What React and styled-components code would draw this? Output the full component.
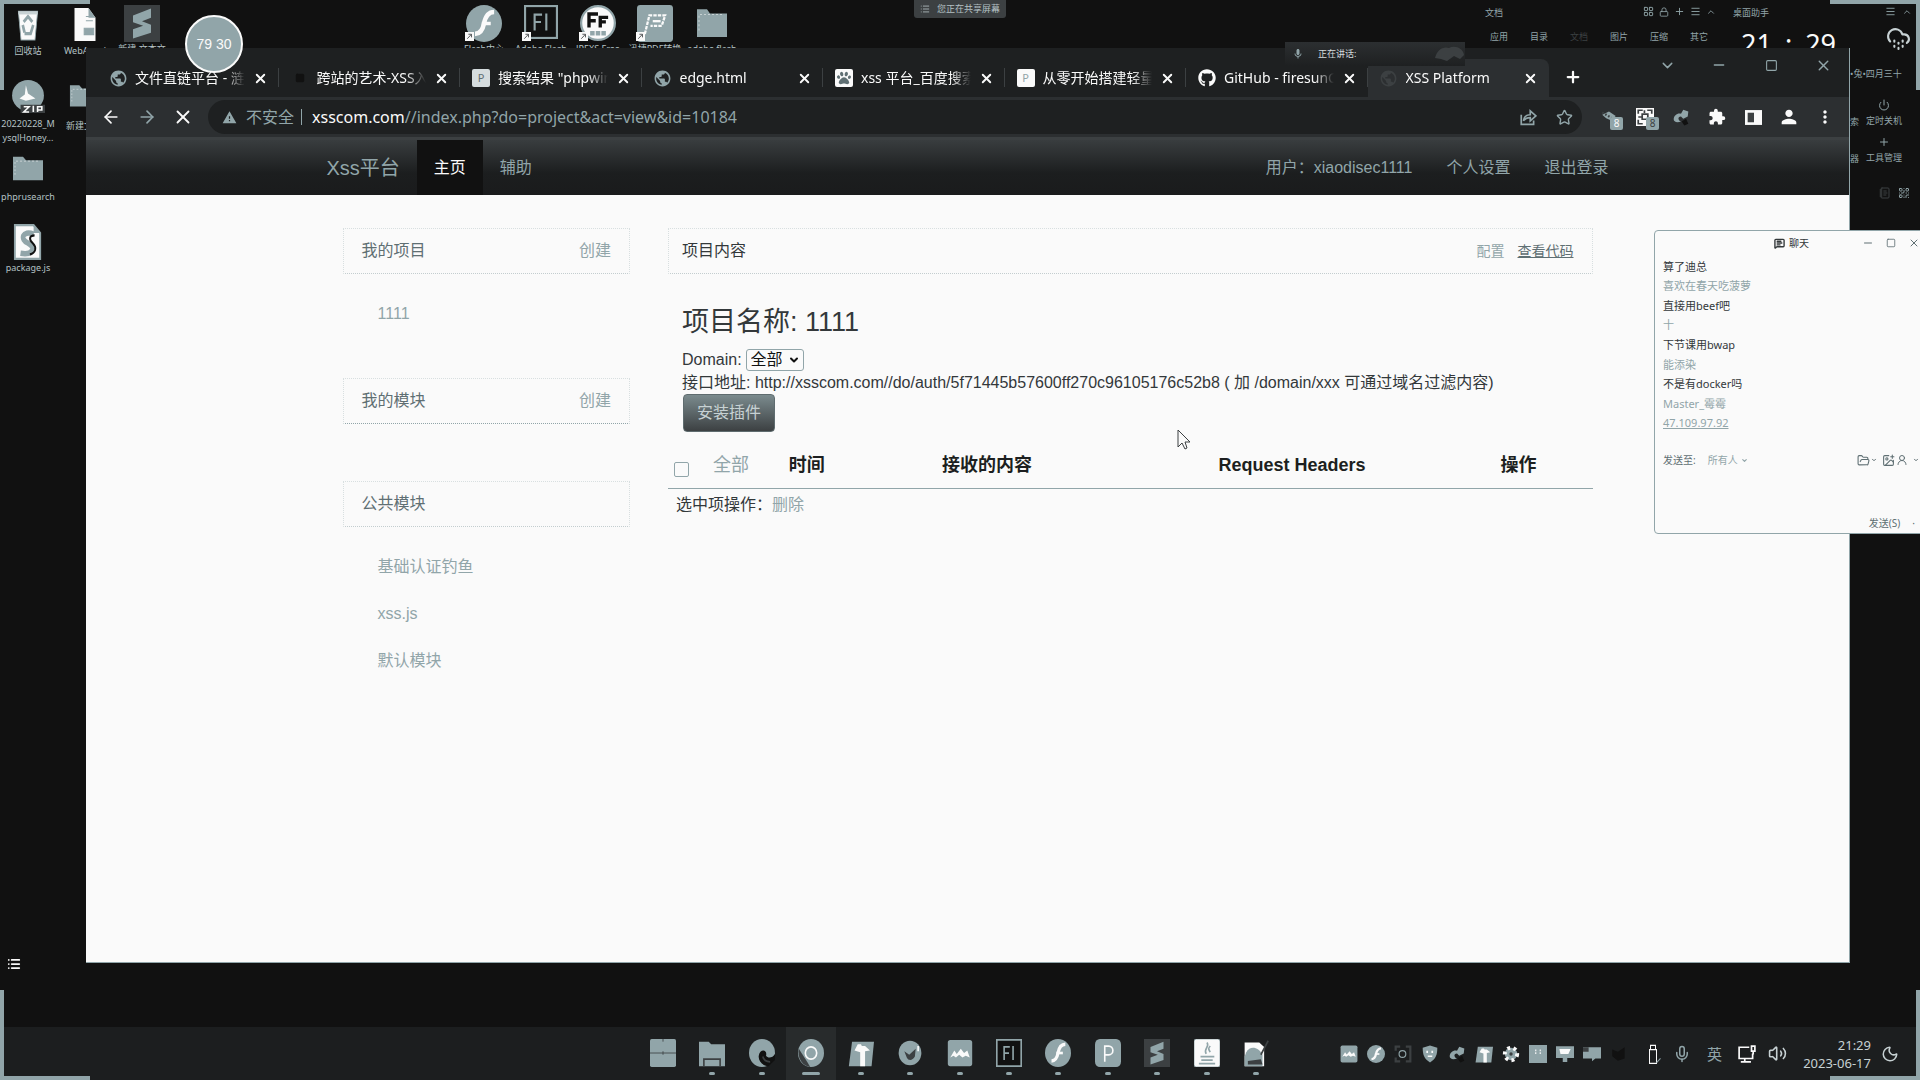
import React from 'react';
import styled, { createGlobalStyle, css } from 'styled-components';
import { MdPublic, MdExtension, MdPerson, MdMoreVert, MdWarning, MdMic } from 'react-icons/md';
import { FaGithub, FaPaw } from 'react-icons/fa';
import {
  ArrowLeft, ArrowRight, X, Star, Plus, Minus, Square, ChevronDown, ChevronUp, Menu, Moon, Mic,
  Volume2, LayoutGrid, Lock, QrCode, NotebookText, Power, CloudDrizzle, FolderOpen, UserRound,
  ImagePlus, List, MessageSquareText,
} from 'lucide-react';

const c = {
  ink: '#111111',
  strip: '#1e2021',
  bar: '#2c2f31',
  mid: '#3c4042',
  teal: '#91a5a9',
  paper: '#fafafa',
  text: '#33383a',
  soft: '#5f6f73',
};
const ui = '"Noto Sans", "Noto Sans CJK SC", sans-serif';
const web = '"Liberation Sans", "Noto Sans CJK SC", sans-serif';

const Global = createGlobalStyle`
  * { box-sizing: border-box; }
  html, body, #root { height: 100%; margin: 0; }
  body { background: ${c.ink}; overflow: hidden; }
  button, input, select { font: inherit; color: inherit; }
  button { padding: 0; border: 0; background: none; display: inline-flex; align-items: center; justify-content: center; }
  a { color: inherit; text-decoration: none; }
  ul { list-style: none; margin: 0; padding: 0; }
  svg { flex: none; display: block; }
`;

const Desktop = styled.div`
  position: relative;
  height: 100vh;
  overflow: hidden;
  background: ${c.ink};
  color: ${c.teal};
  font: 10px/14px ${ui};
`;

/* Desktop shortcuts */
const Shortcut = styled.a`
  position: absolute;
  left: ${(p) => p.$x - 28}px;
  top: ${(p) => p.$y}px;
  width: 56px;
  display: flex;
  flex-direction: column;
  align-items: center;
  text-align: center;
  color: #b4c1c4;
  font-size: 9px;
  white-space: pre;
`;
const ShortcutArt = styled.span`
  height: 37px;
  display: flex;
  align-items: flex-start;
`;

const Corner = styled.i`
  position: absolute;
  z-index: 5;
  width: 90px;
  height: 90px;
  pointer-events: none;
  ${(p) => p.$v}: 0;
  ${(p) => p.$h}: 0;
  border-${(p) => p.$v}: 4px solid ${c.teal};
  border-${(p) => p.$h}: 4px solid ${c.teal};
`;

const Timer = styled.div`
  position: absolute;
  z-index: 4;
  left: 185px;
  top: 15px;
  width: 58px;
  height: 58px;
  border: 2px solid ${c.paper};
  border-radius: 50%;
  background: ${c.teal};
  color: ${c.paper};
  display: flex;
  align-items: center;
  justify-content: center;
  font: 14px/14px "Liberation Sans", sans-serif;
`;

const SharePill = styled.div`
  position: absolute;
  left: 914px;
  top: 0;
  width: 92px;
  height: 18px;
  padding: 0 6px;
  display: flex;
  align-items: center;
  justify-content: space-between;
  background: ${c.mid};
  border-radius: 0 0 3px 3px;
  font-size: 9px;
  color: #b4c1c4;
`;
const SpeakPill = styled.div`
  position: absolute;
  z-index: 4;
  left: 1285px;
  top: 42px;
  width: 180px;
  height: 24px;
  padding: 0 0 0 7px;
  display: flex;
  align-items: center;
  gap: 14px;
  background: linear-gradient(${c.bar}, ${c.strip});
  font-size: 9px;
  color: #d5dcde;
  svg:first-child { color: ${c.teal}; }
  svg:last-child { margin-left: auto; }
`;

/* Desktop assistant gadgets */
const Gadget = styled.div`
  position: absolute;
  left: ${(p) => p.$x}px;
  top: ${(p) => p.$y}px;
  display: flex;
  align-items: center;
  gap: ${(p) => p.$gap || 0}px;
  font-size: 9px;
  line-height: 14px;
  white-space: nowrap;
`;
const Dim = styled.span`color: ${c.mid};`;
const BigClock = styled.div`
  position: absolute;
  left: 1741px;
  top: 29px;
  display: flex;
  gap: 13px;
  color: ${c.paper};
  font: 27px/30px ${ui};
`;
const Tool = styled.a`
  position: absolute;
  left: 1864px;
  top: ${(p) => p.$y}px;
  width: 40px;
  display: flex;
  flex-direction: column;
  align-items: center;
  gap: 3px;
  font-size: 9px;
  line-height: 14px;
  white-space: nowrap;
`;

/* Browser window */
const Browser = styled.section`
  position: absolute;
  z-index: 2;
  inset: 48px 70px 117px 86px;
  display: flex;
  flex-direction: column;
  background: ${c.paper};
  border-right: 1px solid ${c.teal};
`;
const TabStrip = styled.header`
  height: 49px;
  flex: none;
  display: flex;
  padding: 11px 0 0 11px;
  background: ${c.strip};
  color: ${c.paper};
  font: 14px/20px ${ui};
`;
const Tabs = styled.nav`
  flex: 0 1 1452px;
  min-width: 0;
  display: flex;
`;
const Tab = styled.div`
  flex: 1 1 0;
  min-width: 0;
  display: flex;
  align-items: center;
  gap: 8px;
  padding: 0 11px 0 12px;
  position: relative;
  ${(p) => p.$active ? css`
    background: ${c.bar};
    border-radius: 8px 8px 0 0;
  ` : css`
    &::after {
      content: '';
      position: absolute;
      right: 0;
      top: 9px;
      height: 19px;
      border-right: 1px solid ${c.mid};
    }
  `}
`;
const TabTitle = styled.a`
  flex: 1;
  min-width: 0;
  overflow: hidden;
  white-space: nowrap;
  mask-image: linear-gradient(90deg, #000 82%, transparent 100%);
`;
const Fav = styled.span`
  width: 18px;
  height: 18px;
  flex: none;
  display: flex;
  align-items: center;
  justify-content: center;
  border-radius: 2px;
  background: ${(p) => p.$bg || 'none'};
  color: ${(p) => p.$fg || c.teal};
  font-size: 11px;
  line-height: 18px;
`;
const NewTab = styled.button`
  width: 40px;
  height: 36px;
  margin-left: 4px;
`;
const WindowButtons = styled.div`
  margin-left: auto;
  align-self: flex-start;
  display: flex;
  color: ${c.teal};
  button { width: 52px; height: 12px; }
`;
const Toolbar = styled.div`
  height: 40px;
  flex: none;
  display: flex;
  align-items: center;
  padding: 0 6px 0 7px;
  background: ${c.bar};
  color: ${c.paper};
  font: 16px/22px ${ui};
`;
const ToolButton = styled.button`
  position: relative;
  width: 36px;
  height: 32px;
  color: ${(p) => p.$fg || c.paper};
`;
const Badge = styled.span`
  position: absolute;
  left: 19px;
  top: 16px;
  width: 13px;
  height: 13px;
  border-radius: 2px;
  background: ${c.teal};
  color: ${(p) => p.$fg};
  font: 10px/13px ${ui};
`;
const Omnibox = styled.form`
  flex: 1;
  height: 34px;
  margin: 0 9px 0 7px;
  padding: 0 0 0 14px;
  display: flex;
  align-items: center;
  border-radius: 17px;
  background: ${c.strip};
  color: ${c.teal};
`;
const Insecure = styled.span`
  display: flex;
  align-items: center;
  gap: 9px;
  padding-right: 7px;
  margin-right: 10px;
  border-right: 1px solid ${c.teal};
  line-height: 16px;
`;
const Url = styled.div`
  flex: 1;
  b { font-weight: 400; color: ${c.paper}; }
`;

/* Web page */
const SiteBar = styled.nav`
  flex: none;
  height: 58px;
  border-top: 3px solid ${c.mid};
  background: linear-gradient(#393d3f, #1c1e1f 60%, #1a1b1c);
  color: ${c.teal};
  font: 16px/22px ${web};
  padding: 0 26px;
`;
const SiteBarInner = styled.div`
  max-width: 1316px;
  height: 100%;
  margin: 0 auto;
  display: flex;
  align-items: stretch;
`;
const Brand = styled.a`
  display: flex;
  align-items: center;
  padding: 0 17px;
  font-size: 20px;
`;
const NavItem = styled.a`
  display: flex;
  align-items: center;
  padding: 0 17px;
  ${(p) => p.$active && css`background: ${c.ink}; color: ${c.paper};`}
  ${(p) => p.$push && css`margin-left: auto;`}
`;
const Page = styled.main`
  flex: 1;
  min-height: 0;
  padding: 33px 26px 0;
  color: ${c.text};
  font: 16px/20px ${web};
  border-bottom: 1px solid ${c.teal};
`;
const Columns = styled.div`
  max-width: 1250px;
  margin: 0 auto;
  display: grid;
  grid-template-columns: 23% 1fr;
  gap: 38px;
  align-items: start;
`;
const Side = styled.aside`
  display: flex;
  flex-direction: column;
  gap: 23px;
`;
const PanelHead = styled.header`
  height: 46px;
  padding: 0 18px;
  display: flex;
  align-items: center;
  justify-content: space-between;
  border: 1px dotted #d8dfe0;
  border-bottom-color: ${(p) => (p.$strong ? c.teal : '#c3cdcf')};
  color: ${c.soft};
  a { color: ${c.teal}; }
`;
const MainHead = styled(PanelHead)`
  padding: 0 18px 0 13px;
  color: ${c.text};
`;
const HeadLinks = styled.span`
  display: flex;
  gap: 13px;
  font-size: 14px;
  a + a { color: ${c.soft}; text-decoration: underline; }
`;
const PanelList = styled.ul`
  padding: 16px 35px 18px;
  color: ${c.teal};
  li { height: 47px; display: flex; align-items: center; }
`;
const Body = styled.div`padding: 28px 13px 0 14px;`;
const Title = styled.h2`
  margin: 0 0 6px;
  font-size: 27px;
  line-height: 40px;
  font-weight: 400;
`;
const DomainRow = styled.div`
  display: flex;
  align-items: center;
  gap: 4px;
  height: 24px;
`;
const SelectBox = styled.span`
  position: relative;
  color: ${c.ink};
  select {
    appearance: none;
    display: block;
    width: 58px;
    height: 22px;
    padding: 0 4px;
    border: 1px solid ${c.teal};
    border-radius: 3px;
    background: ${c.paper};
    line-height: 18px;
  }
  svg { position: absolute; right: 4px; top: 5px; pointer-events: none; }
`;
const Api = styled.p`
  margin: 0;
  line-height: 22px;
`;
const Install = styled.button`
  width: 92px;
  height: 38px;
  margin: 0 0 10px 1px;
  border-radius: 4px;
  border: 1px solid #5f6c6f;
  background: linear-gradient(#7b8b8e, ${c.mid});
  color: #c7d1d3;
`;
const Records = styled.table`
  width: 100%;
  table-layout: fixed;
  border-collapse: collapse;
  border-bottom: 1px solid ${c.teal};
  font-size: 18px;
  line-height: 22px;
  color: #1c1f20;
  th { height: 46px; padding: 0; font-weight: 700; text-align: center; white-space: nowrap; }
  th:first-child { text-align: left; padding: 9px 0 0 6px; }
  th:nth-child(2) { text-align: left; padding-left: 8px; font-weight: 400; color: ${c.teal}; }
  input {
    appearance: none;
    display: block;
    width: 15px;
    height: 15px;
    margin: 0;
    border: 1px solid ${c.teal};
    border-radius: 2px;
  }
`;
const BulkRow = styled.p`
  margin: 6px 8px;
  a { color: ${c.teal}; }
`;

/* Chat window */
const Chat = styled.section`
  position: absolute;
  z-index: 3;
  left: 1654px;
  right: -14px;
  top: 230px;
  height: 304px;
  display: flex;
  flex-direction: column;
  padding: 3px 0 0 8px;
  border: 1px solid ${c.teal};
  border-radius: 4px;
  background: ${c.paper};
  color: ${c.teal};
  font: 10px/18px ${ui};
`;
const ChatBar = styled.header`
  height: 18px;
  display: flex;
  align-items: center;
  padding: 0 13px 0 111px;
  color: ${c.text};
  gap: 4px;
`;
const ChatButtons = styled.span`
  margin-left: auto;
  display: flex;
  align-items: center;
  gap: 12px;
  color: ${c.soft};
`;
const Messages = styled.ul`
  height: 176px;
  margin-top: 5px;
  display: grid;
  grid-auto-rows: 1fr;
  align-items: center;
`;
const Message = styled.li`
  font-size: 11px;
  color: ${(p) => (p.$strong ? c.text : c.teal)};
  a { text-decoration: underline; }
`;
const ChatTools = styled.div`
  display: flex;
  align-items: center;
  height: 20px;
  margin-top: 17px;
  padding-right: 14px;
  color: ${c.soft};
  > svg { margin-left: 1px; }
  > svg:nth-of-type(odd) { margin-left: 5px; }
`;
const Receiver = styled.button`
  margin: 0 auto 0 12px;
  gap: 3px;
  color: ${c.teal};
`;
const Send = styled.button`
  margin: auto 18px 1px auto;
  gap: 12px;
  color: ${c.soft};
`;

/* Taskbar */
const Taskbar = styled.footer`
  position: absolute;
  z-index: 1;
  left: 0;
  right: 0;
  bottom: 0;
  height: 53px;
  display: flex;
  justify-content: flex-end;
  align-items: center;
  background: #1c1e1f;
`;
const Apps = styled.div`
  flex: 0 1 643px;
  min-width: 0;
  display: flex;
  margin-right: 55px;
`;
const TaskApp = styled.button`
  flex: 1;
  height: 53px;
  padding-top: 12px;
  flex-direction: column;
  justify-content: flex-start;
  gap: 5px;
  &::after {
    content: '';
    width: ${(p) => (p.$active ? 18 : 6)}px;
    height: 3px;
    border-radius: 2px;
    background: ${(p) => (p.$quiet ? 'none' : c.teal)};
  }
  ${(p) => p.$active && css`background: #282b2c;`}
`;
const Tray = styled.div`
  display: flex;
  align-items: center;
  button { width: 27px; height: 28px; }
`;
const System = styled.div`
  display: flex;
  align-items: center;
  gap: 12px;
  margin: 0 6px 0 12px;
  color: ${c.teal};
  font: 15px/18px ${ui};
`;
const InputMode = styled.span`padding: 0 4px;`;
const TimeDate = styled.time`
  width: 78px;
  margin-right: 10px;
  text-align: right;
  font: 13px/18px ${ui};
  color: #c7d1d3;
`;
const Quiet = styled.span`
  padding-right: 21px;
  color: #c7d1d3;
`;

const T = c.teal, W = c.paper, K = c.ink, M = c.mid;
const art = {
  bin: <><path d="M5 4h22l-3 27H8z" fill={W} stroke={T} /><path d="M11 14l5-5 5 5M22 17l-3 8h-7M10 17l2 7" stroke={T} strokeWidth="3" fill="none" /><path d="M5 4h22v3H5z" fill="#c7d1d3" /></>,
  doc: <><path d="M4 1h16l8 9v22H4z" fill={W} /><path d="M20 1v9h8" fill={T} /><path d="M15 20h11v6H15zM17 9h5M17 13h8" fill={T} stroke={T} /></>,
  sublime: <><rect width="32" height="32" fill={M} /><path d="M8 11l16-6v8l-8 3 8 3v7L8 31v-8l9-3-9-3z" fill={T} transform="translate(0 -2)" /></>,
  flash: <><circle cx="16" cy="16" r="16" fill={T} /><path d="M25 6c-6 0-8 5-9 10-1 5-3 9-8 9" stroke={W} strokeWidth="4" fill="none" /><path d="M14 16h8" stroke={W} strokeWidth="3" /></>,
  fl: <><rect x="1" y="1" width="30" height="30" fill={K} stroke={T} strokeWidth="2" /><path d="M10 24V9h7M10 16h6M21 8v16" stroke={T} strokeWidth="2" fill="none" /></>,
  ff: <><circle cx="16" cy="16" r="15" fill={W} stroke={T} strokeWidth="2" /><path d="M8 20V8h8M8 14h6M18 20v-9h7M18 15h5" stroke={K} strokeWidth="3" fill="none" /><path d="M9 25h14" stroke={T} strokeWidth="4" strokeDasharray="4 1" /></>,
  p: <><rect width="32" height="32" rx="6" fill={T} /><path d="M12 26V8h5a5 5 0 010 10h-5" stroke={W} strokeWidth="2" fill="none" /></>,
  pdf: <><rect width="32" height="32" rx="3" fill={T} /><path d="M7 25l4-16h14l-3 9H12" stroke={W} strokeWidth="2" strokeDasharray="3 1" fill="none" /><path d="M14 14h7" stroke={W} strokeWidth="2" /></>,
  folder: <><path d="M1 4h10l3 4h17v22H1z" fill={T} /><path d="M3 24V9h24" stroke="#c7d1d3" fill="none" strokeDasharray="2 2" /></>,
  explorer: <><path d="M0 3h12l3 3h17v25H0z" fill={T} /><path d="M6 31v-8h20v8" fill="none" stroke={M} strokeWidth="2" /></>,
  zip: <><circle cx="16" cy="15" r="15" fill={T} /><path d="M14 5l2 8 7 5-9 2-6-2 5-4z" fill={W} /><path d="M9 24h23v8H9z" fill={M} /><path d="M12 26h5l-5 5h5M21 25v6M25 31v-5h4v3h-4" fill="none" stroke={W} strokeWidth="1.5" /></>,
  script: <><path d="M2 1h20l7 7v23H2z" fill={W} stroke={T} strokeWidth="2" /><path d="M22 1v7h7" fill={T} /><path d="M22 9c-12-4-15 5-6 8 9 4 5 11-8 9" fill="none" stroke={T} strokeWidth="5" /><path d="M23 10c-6 0-6 4-2 7 5 4 3 9-3 10" fill="none" stroke={K} strokeWidth="2" /></>,
  win: <><rect width="32" height="32" rx="2" fill={T} /><path d="M0 16h32" stroke={M} /><path d="M16 0v3M16 14v4" stroke={M} /></>,
  edge: <><circle cx="16" cy="16" r="16" fill={T} /><path d="M32 17c-3 5-9 5-11 2 2-8-8-8-9 0-1 6 5 12 12 12l8-7z" fill={K} /><path d="M17 20c1 4 4 6 9 6" stroke={M} fill="none" strokeWidth="2" /></>,
  chrome: <><circle cx="16" cy="16" r="16" fill={T} /><path d="M1 11l11 16 3 5C4 31-1 20 1 11z" fill={M} /><circle cx="16" cy="16" r="7" fill={T} stroke={W} strokeWidth="2" /></>,
  t: <><path d="M5 3h27l-3 28H1z" fill={T} /><path d="M8 13l4-7h4l1 2h4l6 5-6 1v17h-6V15z" fill={W} /></>,
  face: <><circle cx="16" cy="16" r="14" fill={T} /><path d="M9 14l6 4 8-7-1 9c-3 5-8 5-10 1z" fill={M} /><path d="M26 8v6" stroke={W} strokeWidth="2" /></>,
  wave: <><rect x="1" y="1" width="30" height="30" rx="3" fill={T} /><path d="M4 21l5-8 3 4 5-6 4 5 4-3 3 8-5-2-4 2-4-3-4 3-3-2z" fill={W} /></>,
  java: <><rect width="32" height="32" rx="3" fill={W} stroke={T} /><path d="M16 4c4 5-5 7-1 13M20 8c-3 3-2 4 0 7M8 20h17M9 24h14M6 28h20" stroke={T} strokeWidth="2" fill="none" /></>,
  photo: <><path d="M2 4h18l6 5v22H2z" fill={W} /><path d="M4 15c5-8 15-6 20 3v13H2V20z" fill={T} /><path d="M6 25l16-2 2 6H6z" fill={M} /><path d="M31 2l-9 16" stroke={M} strokeWidth="2" /></>,
  gear: <><circle cx="16" cy="16" r="11" fill={T} stroke={W} strokeWidth="7" strokeDasharray="5 6" /><circle cx="16" cy="16" r="3" fill={M} /></>,
  camera: <><path d="M3 10V3h8M21 3h8v26h-8M11 29H3v-7" stroke={M} strokeWidth="4" fill="none" /><circle cx="15" cy="16" r="6" fill="none" stroke={T} strokeWidth="2" /></>,
  shield: <><path d="M16 1l13 4c0 13-3 20-13 26C6 25 3 18 3 5z" fill={T} /><path d="M11 10v4M20 10v4M12 20h8" stroke={W} strokeWidth="3" /></>,
  sat: <><path d="M3 20c0-7 7-12 13-10l4-7 9 3-1 9-8 4-4-4c-7 1-5 7 0 9-8 3-13 0-13-4z" fill={T} /><path d="M17 24l8-5 4 9-7 3z" fill={K} /></>,
  note: <><rect width="32" height="32" fill={T} /><path d="M12 8v8M20 8v8" stroke={W} strokeWidth="2" strokeDasharray="3 2" /></>,
  screen: <><path d="M0 2h32v21H20v7h-8v-7H0z" fill={T} /><path d="M6 7h20l-4 9H8z" fill={W} /></>,
  chat: <><path d="M0 4h32v20H22l-6 5v-5H0z" fill={T} /><path d="M0 4h10v8H0z" fill={M} /></>,
  dark: <path d="M4 8l10 4 12-8v20l-12 4-10-8z" fill={K} />,
  bug: <><path d="M4 12l12-6 12 8-8 8-9-4z" fill={T} /><path d="M4 8l24 14" stroke={M} strokeWidth="4" strokeDasharray="3 3" /></>,
  qr: <><path d="M0 0h32v32H0z" fill={W} /><path d="M4 10V4h8M20 4h8v6M4 21v7h8M11 11h10v9H11zM15 4v5M4 16h6" fill="none" stroke={M} strokeWidth="3" /></>,
  panel: <><path d="M0 2h32v28H0z" fill={W} /><path d="M5 7h12v18H5z" fill={M} /></>,
  share: <path d="M4 12v17h22v-7M8 23c1-8 6-11 12-11V5l10 9-10 9v-6c-6 0-9 1-12 6z" fill="none" stroke={T} strokeWidth="3" />,
  usb: <><path d="M9 9h14v22H9zM11 2h10v7H11z" fill="none" stroke={W} strokeWidth="2" /><path d="M23 30l8-7" stroke={T} strokeWidth="2" /></>,
  net: <><path d="M20 4H2v20h24v-9M12 24v6M5 30h18M24 2h6v9h-6zM27 11v6" fill="none" stroke={W} strokeWidth="3" /></>,
  arrow: <><rect width="32" height="32" fill={W} /><path d="M8 24L22 9M12 8h11v11" stroke={M} strokeWidth="3" fill="none" /></>,
};
function Art({ name, size = 32, w }) {
  return <svg width={w || size} height={size} viewBox="0 0 32 32" preserveAspectRatio="none" aria-hidden="true">{art[name]}</svg>;
}
const Link = styled.span`
  position: absolute;
  left: 9px;
  top: 27px;
`;

const shortcuts = [
  [28, 7, 'bin', 34, 28, '回收站'],
  [85, 7, 'doc', 34, 28, 'WebArmd'],
  [142, 5, 'sublime', 37, 36, '新建 文本文'],
  [28, 80, 'zip', 33, 34, '20220228_M\nysqlHoney...'],
  [84, 82, 'folder', 26, 30, '新建文件'],
  [28, 153, 'folder', 29, 32, 'phprusearch'],
  [28, 224, 'script', 36, 30, 'package.js'],
  [484, 5, 'flash', 37, 36, 'Flash中心', true],
  [541, 5, 'fl', 34, 34, 'Adobe Flash', true],
  [598, 5, 'ff', 36, 36, 'JPEXS Free', true],
  [655, 5, 'pdf', 37, 36, '迅捷PDF转换', true],
  [712, 5, 'folder', 34, 32, 'adobe flash'],
];
const tabs = [
  ['文件直链平台 - 涟漪', <Fav key="i"><MdPublic size={19} /></Fav>],
  ['跨站的艺术-XSS入门', <Fav key="i" $fg={K}><Square size={10} fill={K} /></Fav>],
  ['搜索结果 "phpwind"', <Fav key="i" $bg="#d5dcde" $fg={c.soft}>P</Fav>],
  ['edge.html', <Fav key="i"><MdPublic size={19} /></Fav>],
  ['xss 平台_百度搜索', <Fav key="i" $bg={W} $fg={c.soft}><FaPaw size={14} /></Fav>],
  ['从零开始搭建轻量级', <Fav key="i" $bg={W}>P</Fav>],
  ['GitHub - firesunCN', <Fav key="i" $fg={W}><FaGithub size={18} /></Fav>],
  ['XSS Platform', <Fav key="i" $fg={M}><MdPublic size={19} /></Fav>],
];
const messages = [
  ['算了迪总', 1], ['喜欢在春天吃菠萝'], ['直接用beef吧', 1], ['十'], ['下节课用bwap', 1],
  ['能添染'], ['不是有docker吗', 1], ['Master_霉霉'], ['47.109.97.92', 0, 1],
];
const apps = ['win', 'explorer', 'edge', 'chrome', 't', 'face', 'wave', 'fl', 'flash', 'p', 'sublime', 'java', 'photo'];
const tray = ['wave', 'flash', 'camera', 'shield', 'sat', 't', 'gear', 'note', 'screen', 'chat', 'dark'];

export default function App() {
  return (
    <Desktop>
      <Global />
      {shortcuts.map(([x, y, icon, h, w, label, linked]) => (
        <Shortcut key={label} href="#" $x={x} $y={y}>
          <ShortcutArt><Art name={icon} size={h} w={w} /></ShortcutArt>
          {linked && <Link><Art name="arrow" size={9} /></Link>}
          {label}
        </Shortcut>
      ))}
      <Corner $v="top" $h="left" />
      <Corner $v="top" $h="right" />
      <Corner $v="bottom" $h="left" />
      <Corner $v="bottom" $h="right" />
      <Timer>79 30</Timer>
      <SharePill><List size={10} />您正在共享屏幕</SharePill>
      <SpeakPill>
        <MdMic size={12} />正在讲话:
        <svg width="30" height="16" viewBox="0 0 30 16"><path d="M0 12C2 4 8 0 14 2c6-3 14 0 15 7l-4 4-6-3-7 5-6-2z" fill={M} /></svg>
      </SpeakPill>

      <Gadget $x={1485} $y={6}>文档</Gadget>
      <Gadget $x={1643} $y={6} $gap={5}>
        <LayoutGrid size={11} /><Lock size={10} /><Plus size={11} /><Menu size={11} /><ChevronUp size={10} />
      </Gadget>
      <Gadget $x={1733} $y={6}>桌面助手</Gadget>
      <Gadget $x={1885} $y={6} $gap={6}><Menu size={11} /><ChevronUp size={10} /></Gadget>
      <Gadget $x={1490} $y={30} $gap={22}>
        <span>应用</span><span>目录</span><Dim>文档</Dim><span>图片</span><span>压缩</span><span>其它</span>
      </Gadget>
      <BigClock><span>21</span><span>:</span><span>29</span></BigClock>
      <Gadget $x={1886} $y={26}><CloudDrizzle size={25} strokeWidth={2} color="#c7d1d3" /></Gadget>
      <Gadget $x={1850} $y={67}>•兔•四月三十</Gadget>
      <Tool href="#" $y={99}><Power size={12} />定时关机</Tool>
      <Tool href="#" $y={136}><Plus size={12} />工具管理</Tool>
      <Gadget $x={1850} $y={115}>索</Gadget>
      <Gadget $x={1850} $y={152}>器</Gadget>
      <Gadget $x={1879} $y={187} $gap={7}><NotebookText size={12} color={M} /><QrCode size={12} /></Gadget>
      <Gadget $x={7} $y={957}><List size={14} strokeWidth={3} color={W} /></Gadget>

      <Browser>
        <TabStrip>
          <Tabs>
            {tabs.map(([title, icon], i) => (
              <Tab key={title} $active={i === 7}>
                {icon}
                <TabTitle href="#">{title}</TabTitle>
                <button aria-label="关闭标签页"><X size={15} strokeWidth={3} /></button>
              </Tab>
            ))}
          </Tabs>
          <NewTab aria-label="新标签页"><Plus size={18} strokeWidth={3} /></NewTab>
          <WindowButtons>
            <button aria-label="搜索标签页"><ChevronDown size={17} /></button>
            <button aria-label="最小化"><Minus size={16} /></button>
            <button aria-label="最大化"><Square size={13} /></button>
            <button aria-label="关闭"><X size={17} /></button>
          </WindowButtons>
        </TabStrip>
        <Toolbar>
          <ToolButton aria-label="后退"><ArrowLeft size={20} /></ToolButton>
          <ToolButton aria-label="前进" $fg={T}><ArrowRight size={20} /></ToolButton>
          <ToolButton aria-label="停止"><X size={22} /></ToolButton>
          <Omnibox>
            <Insecure><MdWarning size={15} />不安全</Insecure>
            <Url><b>xsscom.com</b>//index.php?do=project&amp;act=view&amp;id=10184</Url>
            <ToolButton type="button" aria-label="分享"><Art name="share" size={18} /></ToolButton>
            <ToolButton type="button" aria-label="收藏" $fg={T}><Star size={17} /></ToolButton>
          </Omnibox>
          <ToolButton aria-label="扩展 1"><Art name="bug" size={18} /><Badge $fg={W}>8</Badge></ToolButton>
          <ToolButton aria-label="扩展 2"><Art name="qr" size={18} /><Badge $fg={M}>8</Badge></ToolButton>
          <ToolButton aria-label="扩展 3"><Art name="sat" size={18} /></ToolButton>
          <ToolButton aria-label="扩展程序"><MdExtension size={18} /></ToolButton>
          <ToolButton aria-label="侧边栏"><Art name="panel" size={17} /></ToolButton>
          <ToolButton aria-label="用户"><MdPerson size={22} /></ToolButton>
          <ToolButton aria-label="菜单"><MdMoreVert size={20} /></ToolButton>
        </Toolbar>
        <SiteBar>
          <SiteBarInner>
            <Brand href="#">Xss平台</Brand>
            <NavItem href="#" $active>主页</NavItem>
            <NavItem href="#">辅助</NavItem>
            <NavItem href="#" $push>用户：xiaodisec1111</NavItem>
            <NavItem href="#">个人设置</NavItem>
            <NavItem href="#">退出登录</NavItem>
          </SiteBarInner>
        </SiteBar>
        <Page>
          <Columns>
            <Side>
              <section>
                <PanelHead><span>我的项目</span><a href="#">创建</a></PanelHead>
                <PanelList><li><a href="#">1111</a></li></PanelList>
              </section>
              <section>
                <PanelHead $strong><span>我的模块</span><a href="#">创建</a></PanelHead>
                <PanelList />
              </section>
              <section>
                <PanelHead><span>公共模块</span></PanelHead>
                <PanelList>
                  <li><a href="#">基础认证钓鱼</a></li>
                  <li><a href="#">xss.js</a></li>
                  <li><a href="#">默认模块</a></li>
                </PanelList>
              </section>
            </Side>
            <section>
              <MainHead>
                <span>项目内容</span>
                <HeadLinks><a href="#">配置</a><a href="#">查看代码</a></HeadLinks>
              </MainHead>
              <Body>
                <Title>项目名称: 1111</Title>
                <DomainRow>
                  <label htmlFor="domain">Domain:</label>
                  <SelectBox>
                    <select id="domain"><option>全部</option></select>
                    <ChevronDown size={12} strokeWidth={4} />
                  </SelectBox>
                </DomainRow>
                <Api>接口地址: http://xsscom.com//do/auth/5f71445b57600ff270c96105176c52b8 ( 加 /domain/xxx 可通过域名过滤内容)</Api>
                <Install>安装插件</Install>
              </Body>
              <Records>
                <colgroup>
                  <col width="4%" /><col width="8%" /><col width="6%" /><col width="33%" /><col width="33%" /><col width="16%" />
                </colgroup>
                <thead>
                  <tr>
                    <th><input type="checkbox" aria-label="全选" /></th>
                    <th><a href="#">全部</a></th>
                    <th>时间</th>
                    <th>接收的内容</th>
                    <th>Request Headers</th>
                    <th>操作</th>
                  </tr>
                </thead>
              </Records>
              <BulkRow>选中项操作：<a href="#">删除</a></BulkRow>
            </section>
          </Columns>
        </Page>
      </Browser>

      <Chat>
        <ChatBar>
          <MessageSquareText size={11} strokeWidth={3} />聊天
          <ChatButtons><Minus size={12} /><Square size={10} /><X size={12} /></ChatButtons>
        </ChatBar>
        <Messages>
          {messages.map(([text, strong, link]) => (
            <Message key={text} $strong={strong}>{link ? <a href="#">{text}</a> : text}</Message>
          ))}
        </Messages>
        <ChatTools>
          <span>发送至:</span>
          <Receiver>所有人<ChevronDown size={7} strokeWidth={4} /></Receiver>
          <FolderOpen size={13} /><ChevronDown size={6} strokeWidth={4} />
          <ImagePlus size={13} />
          <UserRound size={12} />
          <ChevronDown size={6} strokeWidth={4} />
        </ChatTools>
        <Send>发送(S)<span>·</span></Send>
      </Chat>

      <Cursor width="14" height="22" viewBox="0 0 14 22">
        <path d="M1 1v17l4-4 3 6 2-1-2-6h5z" fill={W} stroke={M} />
      </Cursor>

      <Taskbar>
        <Apps>
          {apps.map((name) => (
            <TaskApp key={name} aria-label={name} $quiet={name === 'win'} $active={name === 'chrome'}>
              <Art name={name} size={28} w={26} />
            </TaskApp>
          ))}
        </Apps>
        <Tray>
          {tray.map((name) => <button key={name} aria-label={name}><Art name={name} size={18} /></button>)}
        </Tray>
        <System>
          <Art name="usb" size={20} w={16} />
          <Mic size={18} />
          <InputMode>英</InputMode>
          <Art name="net" size={18} />
          <Volume2 size={19} color="#c7d1d3" />
        </System>
        <TimeDate>21:29<br />2023-06-17</TimeDate>
        <Quiet><Moon size={18} /></Quiet>
      </Taskbar>
    </Desktop>
  );
}

const Cursor = styled.svg`
  position: absolute;
  z-index: 6;
  left: 1177px;
  top: 429px;
`;
